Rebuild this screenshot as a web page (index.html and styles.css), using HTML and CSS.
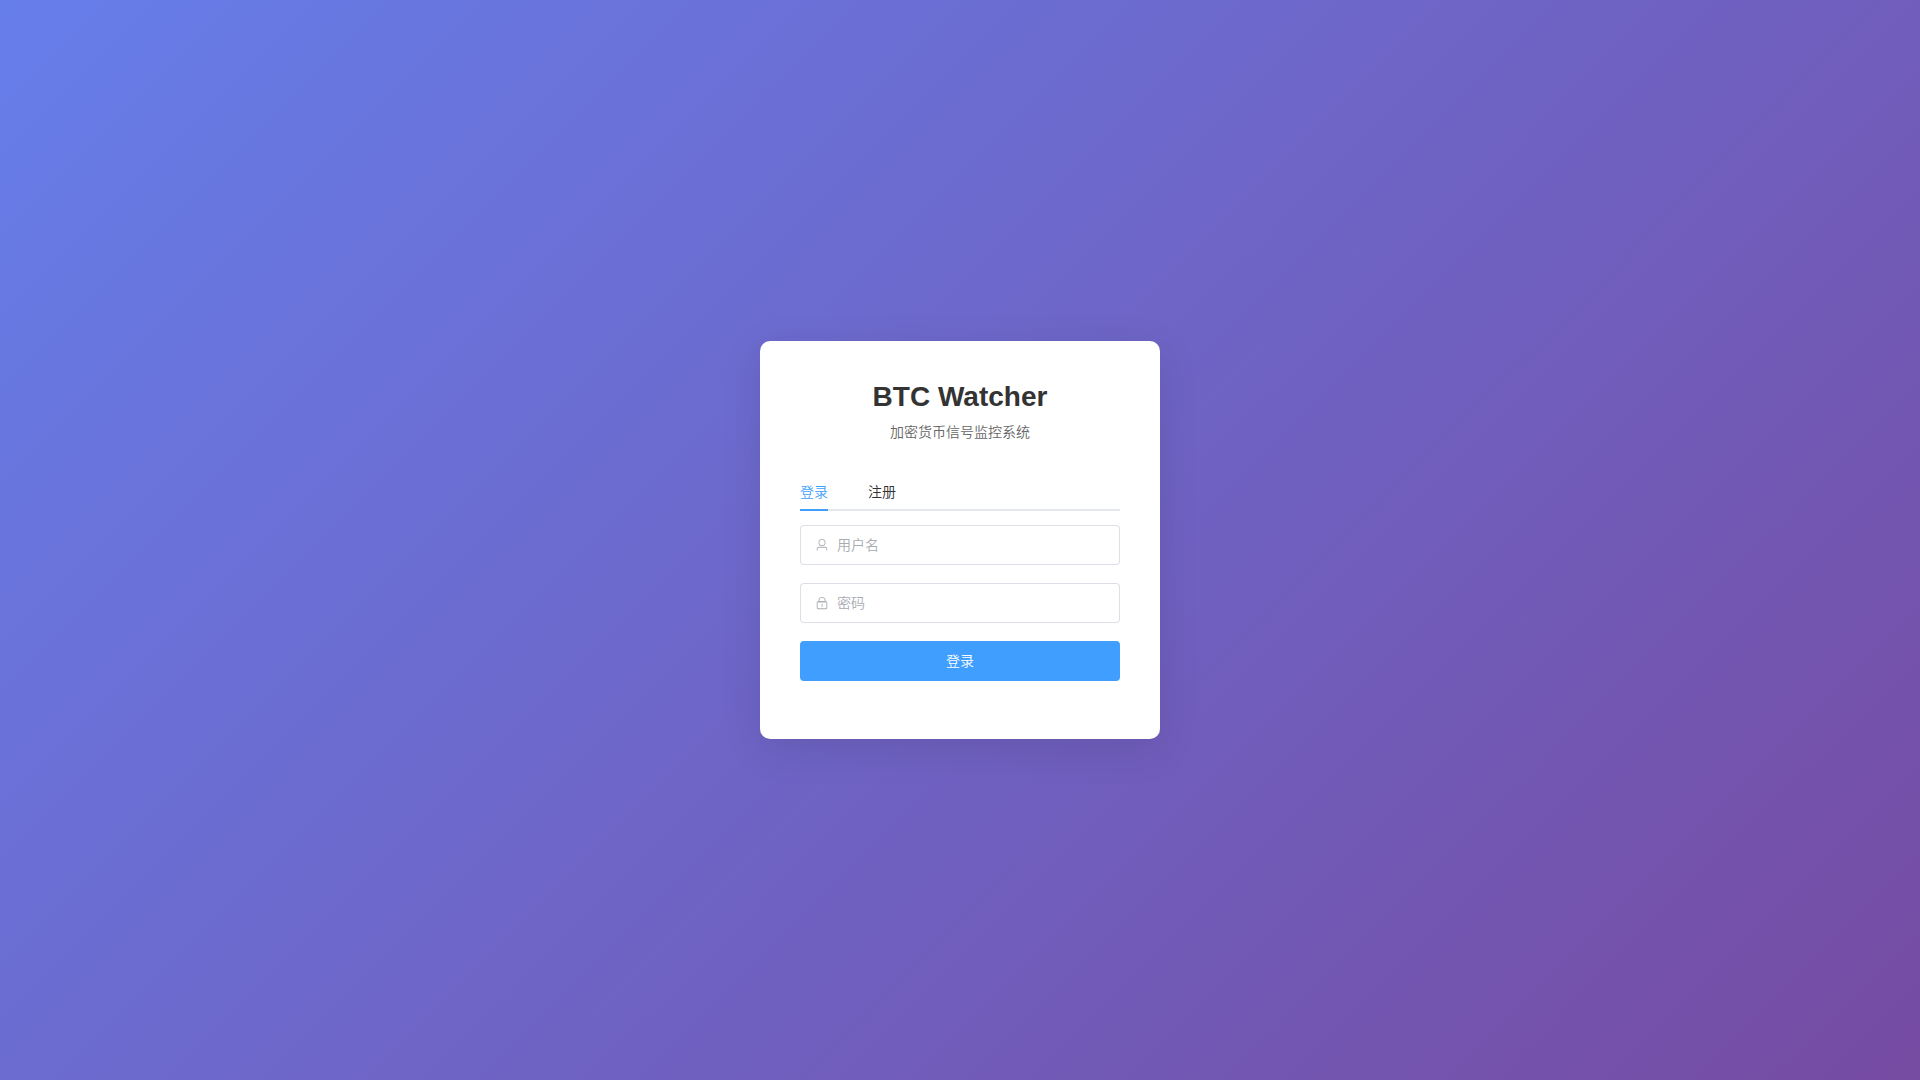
FILE: index.html
```html
<!DOCTYPE html>
<html lang="zh-CN">
<head>
<meta charset="UTF-8">
<title>BTC Watcher</title>
<link rel="stylesheet" href="styles.css">
</head>
<body>
<main class="login-page">
  <section class="login-card">
    <header class="login-header">
      <h1 class="login-title">BTC Watcher</h1>
      <p class="login-subtitle">加密货币信号监控系统</p>
    </header>
    <nav class="tabs">
      <a class="tab tab-active">登录</a>
      <a class="tab">注册</a>
    </nav>
    <form class="login-form">
      <label class="field">
        <svg class="field-icon" viewBox="0 0 1024 1024"><path fill="currentColor" d="M512 512a192 192 0 1 0 0-384 192 192 0 0 0 0 384m0 64a256 256 0 1 1 0-512 256 256 0 0 1 0 512m320 320v-96a96 96 0 0 0-96-96H288a96 96 0 0 0-96 96v96a32 32 0 1 1-64 0v-96a160 160 0 0 1 160-160h448a160 160 0 0 1 160 160v96a32 32 0 1 1-64 0"/></svg>
        <input class="field-input" type="text" placeholder="用户名">
      </label>
      <label class="field">
        <svg class="field-icon" viewBox="0 0 1024 1024"><path fill="currentColor" d="M224 448a32 32 0 0 0-32 32v384a32 32 0 0 0 32 32h576a32 32 0 0 0 32-32V480a32 32 0 0 0-32-32zm0-64h576a96 96 0 0 1 96 96v384a96 96 0 0 1-96 96H224a96 96 0 0 1-96-96V480a96 96 0 0 1 96-96"/><path fill="currentColor" d="M512 544a32 32 0 0 1 32 32v192a32 32 0 1 1-64 0V576a32 32 0 0 1 32-32m192-160v-64a192 192 0 1 0-384 0v64zM512 64a256 256 0 0 1 256 256v128H256V320A256 256 0 0 1 512 64"/></svg>
        <input class="field-input" type="password" placeholder="密码">
      </label>
      <button class="submit" type="button">登录</button>
    </form>
  </section>
</main>
</body>
</html>
```

FILE: styles.css
```css
* { box-sizing: border-box; }
body {
  margin: 0;
  font-family: "Liberation Sans", "Noto Sans CJK SC DemiLight", "Noto Sans CJK SC", sans-serif;
}
.login-page {
  display: flex;
  align-items: center;
  justify-content: center;
  height: 100vh;
  background: linear-gradient(135deg, #667eea 0%, #764ba2 100%);
}
.login-card {
  width: 400px;
  height: 398px;
  padding: 40px;
  border-radius: 10px;
  background: #fff;
  box-shadow: 0 10px 40px rgba(0, 0, 0, 0.1);
}
.login-header {
  margin-bottom: 30px;
  text-align: center;
}
.login-title {
  margin: 0 0 10px;
  font-size: 28px;
  line-height: 32px;
  color: #333;
}
.login-subtitle {
  margin: 0;
  font-size: 14px;
  line-height: 18px;
  color: #666;
}
.tabs {
  display: flex;
  gap: 40px;
  height: 40px;
  margin-bottom: 14px;
  box-shadow: inset 0 -2px #e4e7ed;
}
.tab {
  height: 40px;
  font-size: 14px;
  line-height: 42px;
  color: #303133;
}
.tab-active {
  color: #409eff;
  box-shadow: inset 0 -2px #409eff;
}
.login-form {
  display: grid;
  gap: 18px;
}
.field {
  display: flex;
  align-items: center;
  gap: 8px;
  height: 40px;
  padding: 0 15px;
  border-radius: 4px;
  box-shadow: inset 0 0 0 1px #dcdfe6;
}
.field-icon {
  width: 14px;
  height: 14px;
  color: #a8abb2;
}
.field-input {
  flex: 1;
  min-width: 0;
  padding: 0;
  border: 0;
  outline: 0;
  background: none;
  font-family: inherit;
  font-size: 14px;
  line-height: 38px;
}
.field-input::placeholder { color: #a8abb2; }
.submit {
  height: 40px;
  padding: 0;
  border: 0;
  border-radius: 4px;
  background: #409eff;
  color: #fff;
  font-family: inherit;
  font-size: 14px;
  line-height: 40px;
}
```
